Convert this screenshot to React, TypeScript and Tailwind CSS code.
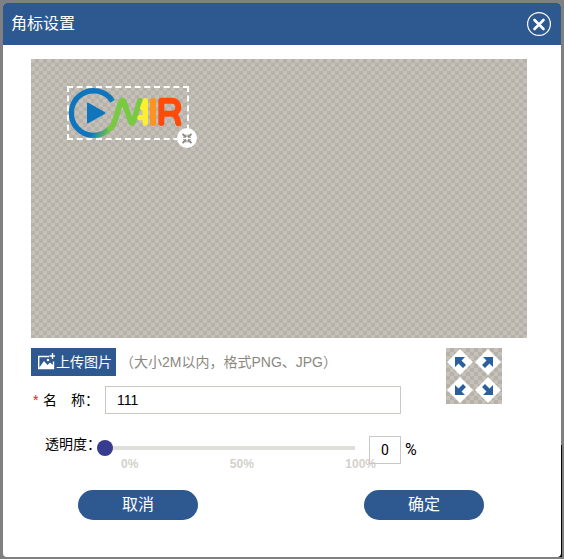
import { useState } from "react";

const checker =
  "bg-[#c5c1b9] bg-[conic-gradient(#b6b2aa_25%,transparent_0_50%,#b6b2aa_0_75%,transparent_0)] bg-size-[8px_8px]";

function Logo() {
  return (
    <svg viewBox="21 18 366 162" className="block h-full w-full" fill="none" strokeLinecap="round" strokeLinejoin="round">
      <defs>
        <linearGradient id="ring" gradientUnits="userSpaceOnUse" x1="118" y1="120" x2="158" y2="142">
          <stop offset="0" stopColor="#0f76bd" />
          <stop offset="1" stopColor="#7ac943" />
        </linearGradient>
      </defs>
      <path d="M158 64A67 67 0 1 0 150 145" stroke="url(#ring)" strokeWidth="16" strokeLinecap="butt" />
      <path d="M81 70Q81 66 85 68L134 96Q138 99 134 102L85 130Q81 132 81 128Z" fill="#0f76bd" />
      <path d="M150 145C166 138 172 88 184 64Q188 58 192 66L212 125Q216 134 220 125L240 62" stroke="#7ac943" strokeWidth="17" />
      <path d="M256 62V129M256 62L248 84M256 113H240" stroke="#fcee31" strokeWidth="16" />
      <path d="M279 62V129" stroke="#ff931e" strokeWidth="18" />
      <path d="M304 129V62H336C361 62 361 101 336 101H304M338 101Q350 104 355 130" stroke="#ff4b0a" strokeWidth="18" />
    </svg>
  );
}

function Arrow({ turn }: { turn: string }) {
  return (
    <svg viewBox="0 0 28 28" className={`block h-7 w-7 ${turn}`}>
      <path d="M14 1L27 14L14 27L1 14Z" fill="#fff" />
      <path d="M9 9H19L15.500 12.500L20 17L17 20L12.500 15.500L9 19Z" fill="#295f9f" />
    </svg>
  );
}

const corners = [
  { label: "左上", turn: "" },
  { label: "右上", turn: "rotate-90" },
  { label: "左下", turn: "-rotate-90" },
  { label: "右下", turn: "rotate-180" },
];

export default function App() {
  const [name, setName] = useState("111");
  const [opacity, setOpacity] = useState(0);
  return (
    <div className="relative flex min-h-screen bg-[#808080] px-[3px] pt-[3px] pb-0.5 font-['Liberation_Sans','Noto_Sans_CJK_SC',sans-serif] text-sm text-black">
      <div className="absolute right-0.5 bottom-0.5 h-28 w-1 bg-black" />
      <div role="dialog" aria-labelledby="title" className="relative flex-1 overflow-hidden rounded bg-white">
        <header className="flex h-[42px] items-center justify-between bg-[#2e5990] pr-2.5 pl-2 text-white">
          <h1 id="title" className="text-base">角标设置</h1>
          <button aria-label="关闭" className="h-6 w-6">
            <svg viewBox="0 0 24 24" className="block" fill="none" stroke="currentColor">
              <circle cx="12" cy="12" r="11.400" strokeWidth="1.200" />
              <path d="M7.500 8L16.500 17M16.500 8L7.500 17" strokeWidth="2.600" strokeLinecap="round" />
            </svg>
          </button>
        </header>

        <main className="pt-3.5 pr-[34px] pb-9 pl-7">
          <div className={`h-[279px] pt-[27px] pl-9 ${checker}`}>
            <div className="relative h-[54px] w-[122px]">
              <Logo />
              <div className="absolute inset-0 border-2 border-dashed border-white" />
              <button aria-label="缩放" className="absolute -right-2 -bottom-2 h-5 w-5">
                <svg viewBox="0 0 20 20" className="block">
                  <circle cx="10" cy="10" r="10" fill="#fff" />
                  <g fill="none" stroke="#8a8882" strokeWidth="1.800">
                    <path d="M5.500 6L9 9M14.500 6L11 9M5.500 15L9 12M14.500 15L11 12" />
                    <path d="M6 9.200H9V6.500M14 9.200H11V6.500M6 11.800H9V14.500M14 11.800H11V14.500" strokeWidth="0.900" />
                  </g>
                </svg>
              </button>
            </div>
          </div>

          <div className="flex justify-between pt-2.5 pr-[25px]">
            <div>
              <div className="flex h-7 items-center gap-1">
                <button className="flex h-7 w-[85px] items-center gap-px bg-[#2e5990] pl-1.5 text-sm text-white">
                  <svg viewBox="0 0 18 18" className="h-[18px] w-[18px]" fill="none" stroke="currentColor">
                    <path d="M12 3.500H1.700V15.500H16.500V8.500" strokeWidth="1.400" />
                    <path d="M2 15L7 8L10.500 12L13 9.500L16 12V15Z" fill="currentColor" stroke="none" />
                    <circle cx="11" cy="7" r="1.300" fill="currentColor" stroke="none" />
                    <path d="M15.500 0V6M12.500 3H18" strokeWidth="1.400" />
                  </svg>
                  上传图片
                </button>
                <span className="text-[#8b887f]">（大小2M以内，格式PNG、JPG）</span>
              </div>
              <div className="mt-2.5 flex h-7 items-center">
                <span className="w-3 pl-0.5 text-[#e02020]">*</span>
                <label htmlFor="name" className="w-[62px] whitespace-pre">名　称：</label>
                <input id="name" value={name} onChange={(e) => setName(e.target.value)} className="h-7 w-[296px] border border-[#cac8c0] px-[11px] outline-none" />
              </div>
            </div>
            <div className={`grid h-14 w-14 grid-cols-2 ${checker}`}>
              {corners.map((c) => (
                <button key={c.label} aria-label={c.label}>
                  <Arrow turn={c.turn} />
                </button>
              ))}
            </div>
          </div>

          <div className="mt-[22px] flex h-7 items-start">
            <label htmlFor="opacity" className="w-[66px] pl-3.5 leading-4 whitespace-nowrap">透明度：</label>
            <div className="w-[258px] pt-1">
              <input
                id="opacity"
                type="range"
                min="0"
                max="100"
                value={opacity}
                onChange={(e) => setOpacity(Number(e.target.value))}
                className="block h-4 w-full appearance-none bg-transparent [&::-webkit-slider-runnable-track]:h-1 [&::-webkit-slider-runnable-track]:bg-[#dfdedb] [&::-webkit-slider-thumb]:-mt-1.5 [&::-webkit-slider-thumb]:h-4 [&::-webkit-slider-thumb]:w-4 [&::-webkit-slider-thumb]:appearance-none [&::-webkit-slider-thumb]:rounded-full [&::-webkit-slider-thumb]:bg-[#383c8e]"
              />
              <div className="-mr-[21px] flex justify-between pl-6 text-xs font-bold text-[#d3d1cb]">
                <span>0%</span>
                <span>50%</span>
                <span>100%</span>
              </div>
            </div>
            <input aria-label="透明度百分比" value={opacity} onChange={(e) => setOpacity(Number(e.target.value) || 0)} className="ml-3.5 h-7 w-8 border border-[#cac8c0] text-center font-[Roboto,sans-serif] text-sm outline-none" />
            <span className="ml-1 font-[Roboto,sans-serif] text-base leading-7">%</span>
          </div>

          <div className="mt-[26px] flex justify-between pr-[43px] pl-[47px] text-base text-white">
            <button className="h-[30px] w-[120px] rounded-full bg-[#2e5990]">取消</button>
            <button className="h-[30px] w-[120px] rounded-full bg-[#2e5990]">确定</button>
          </div>
        </main>
      </div>
    </div>
  );
}
